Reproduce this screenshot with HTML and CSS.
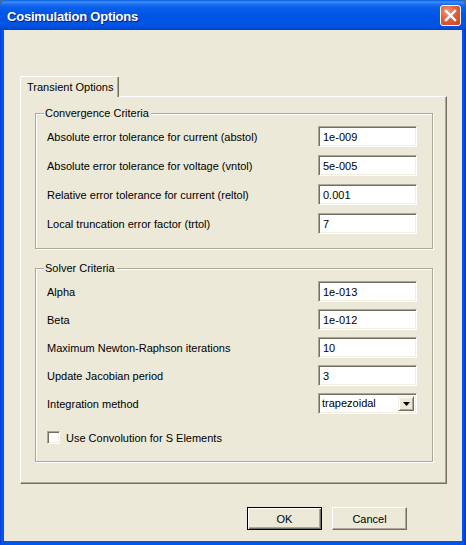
FILE: index.html
```html
<!DOCTYPE html>
<html>
<head>
<meta charset="utf-8">
<link rel="stylesheet" href="styles.css">
</head>
<body>
<div class="window">
  <div class="titlebar">
    <span class="title">Cosimulation Options</span>
    <span class="close"><svg width="13" height="13" viewBox="0 0 13 13"><path d="M2 2 L11 11 M11 2 L2 11" stroke="#fff" stroke-width="2.4" stroke-linecap="square"/></svg></span>
  </div>
  <div class="client">
    <div class="tabs"><div class="tab">Transient Options</div></div>
    <div class="panel">
      <div class="group g1">
        <span class="group-title">Convergence Criteria</span>
        <div class="rows">
          <div class="row"><span>Absolute error tolerance for current (abstol)</span><span class="field">1e-009</span></div>
          <div class="row"><span>Absolute error tolerance for voltage (vntol)</span><span class="field">5e-005</span></div>
          <div class="row"><span>Relative error tolerance for current (reltol)</span><span class="field">0.001</span></div>
          <div class="row"><span>Local truncation error factor (trtol)</span><span class="field">7</span></div>
        </div>
      </div>
      <div class="group g2">
        <span class="group-title">Solver Criteria</span>
        <div class="rows tight">
          <div class="row"><span>Alpha</span><span class="field">1e-013</span></div>
          <div class="row"><span>Beta</span><span class="field">1e-012</span></div>
          <div class="row"><span>Maximum Newton-Raphson iterations</span><span class="field">10</span></div>
          <div class="row"><span>Update Jacobian period</span><span class="field">3</span></div>
          <div class="row"><span>Integration method</span><span class="select"><span class="select-text">trapezoidal</span><span class="select-btn"><svg width="7" height="4" viewBox="0 0 7 4"><path d="M0 0 H7 L3.5 4 Z" fill="#000"/></svg></span></span></div>
        </div>
        <div class="check"><span class="box"></span><span>Use Convolution for S Elements</span></div>
      </div>
    </div>
    <div class="footer">
      <span class="btn default">OK</span>
      <span class="btn">Cancel</span>
    </div>
  </div>
</div>
</body>
</html>
```
FILE: styles.css
```css
html, body {
  margin: 0;
  padding: 0;
  background: #3a6ea5;
}
body {
  width: 466px;
  height: 545px;
  overflow: hidden;
  font-family: "Liberation Sans", Arial, sans-serif;
  font-size: 11px;
  color: #000;
}
.window {
  width: 466px;
  height: 545px;
  box-sizing: border-box;
  display: flex;
  flex-direction: column;
  border-radius: 7px 7px 0 0;
  overflow: hidden;
  background: linear-gradient(to right, #0831d9 0, #0055ea 1px, #0055ea 3px, #0055ea calc(100% - 3px), #0831d9 100%);
}
.titlebar {
  height: 30px;
  flex: none;
  display: flex;
  align-items: center;
  justify-content: space-between;
  padding: 0 5px 0 7px;
  background: linear-gradient(to bottom, #0a5ddd 0%, #3c8ff8 7%, #1e6ff0 14%, #0660ea 25%, #0055e4 50%, #0054e3 80%, #0050dd 92%, #0040c4 100%);
}
.title {
  color: #fff;
  font-weight: bold;
  font-size: 13px;
  letter-spacing: -0.2px;
  text-shadow: 1px 1px 0 #0a1e7a;
  margin-top: 2px;
}
.close {
  width: 19px;
  height: 19px;
  border: 1px solid #fff;
  border-radius: 3px;
  display: flex;
  align-items: center;
  justify-content: center;
  background: radial-gradient(circle at 35% 30%, #ec9a80 0%, #e2603c 45%, #c8401a 100%);
  margin-top: 1px;
}
.client {
  flex: 1;
  margin: 0 4px 4px 4px;
  background: #ece9d8;
  padding: 46px 15px 0 16px;
  box-sizing: border-box;
}
.tabs {
  display: flex;
  height: 20px;
  position: relative;
  z-index: 1;
}
.tab {
  height: 21px;
  box-sizing: border-box;
  padding: 4px 5px 0 6px;
  white-space: nowrap;
  background: #ece9d8;
  border-top: 1px solid #fff;
  border-left: 1px solid #fff;
  border-right: 1px solid #716f64;
  box-shadow: inset -1px 0 0 #aca899;
  border-radius: 2px 2px 0 0;
}
.panel {
  height: 388px;
  box-sizing: border-box;
  border-top: 1px solid #fff;
  border-left: 1px solid #fff;
  border-right: 1px solid #716f64;
  border-bottom: 1px solid #716f64;
  box-shadow: inset -1px -1px 0 #aca899;
  padding: 16px 14px 0 14px;
  display: flex;
  flex-direction: column;
  gap: 19px;
}
.group {
  position: relative;
  border: 1px solid #aca899;
  box-shadow: 1px 1px 0 #fff, inset 1px 1px 0 #fff;
  width: 398px;
  box-sizing: border-box;
}
.g1 { padding: 12px 15px 14px 11px; }
.g2 { padding: 12px 15px 17px 11px; }
.group-title {
  position: absolute;
  top: -7px;
  left: 8px;
  padding: 0 2px 0 1px;
  background: #ece9d8;
  line-height: 13px;
}
.rows {
  display: flex;
  flex-direction: column;
  gap: 8px;
}
.rows.tight { gap: 7px; }
.row {
  display: grid;
  grid-template-columns: 1fr 99px;
  align-items: center;
  height: 21px;
}
.field, .select {
  height: 21px;
  box-sizing: border-box;
  background: #fff;
  border-top: 1px solid #aca899;
  border-left: 1px solid #aca899;
  border-right: 1px solid #fff;
  border-bottom: 1px solid #fff;
  box-shadow: inset 1px 1px 0 #716f64, inset -1px -1px 0 #f1efe2;
  padding: 4px 0 0 4px;
  line-height: 13px;
}
.select {
  display: flex;
  padding: 2px;
  align-items: stretch;
}
.select-text {
  flex: 1;
  line-height: 15px;
  padding-left: 1px;
}
.select-btn {
  width: 16px;
  box-sizing: border-box;
  background: #ece9d8;
  border-top: 1px solid #f1efe2;
  border-left: 1px solid #f1efe2;
  border-right: 1px solid #716f64;
  border-bottom: 1px solid #716f64;
  box-shadow: inset 1px 1px 0 #fff, inset -1px -1px 0 #aca899;
  display: flex;
  align-items: center;
  justify-content: center;
}
.check {
  display: flex;
  align-items: center;
  gap: 6px;
  margin-top: 17px;
  height: 13px;
}
.box {
  width: 13px;
  height: 13px;
  box-sizing: border-box;
  background: #fff;
  border-top: 1px solid #aca899;
  border-left: 1px solid #aca899;
  border-right: 1px solid #fff;
  border-bottom: 1px solid #fff;
  box-shadow: inset 1px 1px 0 #716f64, inset -1px -1px 0 #f1efe2;
}
.footer {
  display: flex;
  justify-content: flex-end;
  gap: 10px;
  padding: 23px 40px 0 0;
}
.btn {
  width: 75px;
  height: 23px;
  box-sizing: border-box;
  display: flex;
  align-items: center;
  justify-content: center;
  background: #ece9d8;
  border-top: 1px solid #fff;
  border-left: 1px solid #fff;
  border-right: 1px solid #716f64;
  border-bottom: 1px solid #716f64;
  box-shadow: inset -1px -1px 0 #aca899;
}
.btn.default {
  border: 1px solid #000;
  box-shadow: inset 1px 1px 0 #fff, inset -1px -1px 0 #716f64, inset -2px -2px 0 #aca899;
}
```
